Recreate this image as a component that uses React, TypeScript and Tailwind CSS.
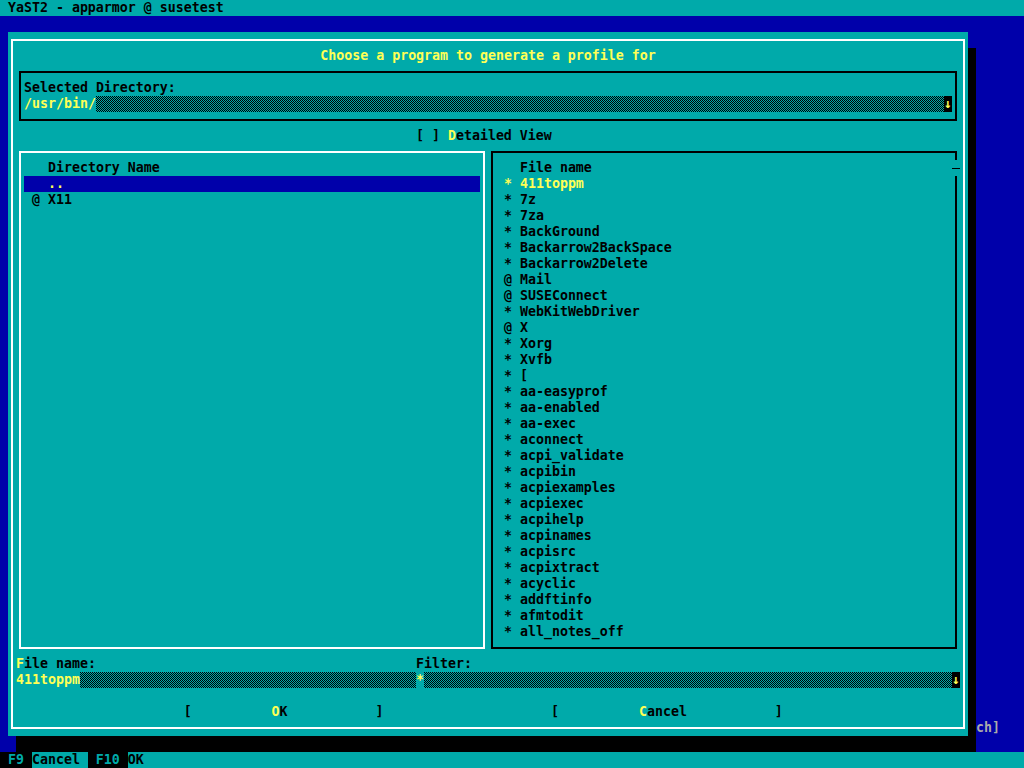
import * as React from 'react';

// 8x16 character cells, VGA-ish palette
const row = 'h-4 leading-4 whitespace-pre';

const files: [string, string][] = [
  ['*', '411toppm'],
  ['*', '7z'],
  ['*', '7za'],
  ['*', 'BackGround'],
  ['*', 'Backarrow2BackSpace'],
  ['*', 'Backarrow2Delete'],
  ['@', 'Mail'],
  ['@', 'SUSEConnect'],
  ['*', 'WebKitWebDriver'],
  ['@', 'X'],
  ['*', 'Xorg'],
  ['*', 'Xvfb'],
  ['*', '['],
  ['*', 'aa-easyprof'],
  ['*', 'aa-enabled'],
  ['*', 'aa-exec'],
  ['*', 'aconnect'],
  ['*', 'acpi_validate'],
  ['*', 'acpibin'],
  ['*', 'acpiexamples'],
  ['*', 'acpiexec'],
  ['*', 'acpihelp'],
  ['*', 'acpinames'],
  ['*', 'acpisrc'],
  ['*', 'acpixtract'],
  ['*', 'acyclic'],
  ['*', 'addftinfo'],
  ['*', 'afmtodit'],
  ['*', 'all_notes_off'],
];

const Y = ({ children }: { children: React.ReactNode }) => (
  <span className="text-[#ffff55]">{children}</span>
);

// the checkered "empty input" fill of the text ui
const Dither = ({ id }: { id: string }) => (
  <svg className="flex-1 h-4 bg-[#00aaaa]" shapeRendering="crispEdges">
    <defs>
      <pattern id={id} width="2" height="2" patternUnits="userSpaceOnUse">
        <rect x="0" y="0" width="1" height="1" fill="#000" />
        <rect x="1" y="1" width="1" height="1" fill="#000" />
      </pattern>
    </defs>
    <rect width="100%" height="100%" fill={`url(#${id})`} />
  </svg>
);

export default function App() {
  return (
    <div className="w-[1024px] h-[768px] overflow-hidden bg-[#0000aa] text-black font-['DejaVu_Sans_Mono',monospace] font-bold text-[13.28px]">
      {/* title line */}
      <div className={`${row} bg-[#00aaaa] pl-2`}>YaST2 - apparmor @ susetest</div>
      <div className="h-4 bg-[#0000aa]" />

      <div className="flex h-[720px]">
        <div className="w-2" />
        <div className="w-[960px] h-[704px] bg-[#00aaaa] shadow-[8px_16px_0_0_#000] px-[3px] py-[7px]">
          <div className="h-full border-2 border-white px-[3px] py-[7px]">
            <div className={`${row} text-center`}>
              <Y>Choose a program to generate a profile for</Y>
            </div>

            {/* Selected Directory */}
            <div className="h-16 px-[3px] py-[7px]">
              <div className="h-full border-2 border-black px-[3px] py-[7px]">
                <div className={row}>Selected Directory:</div>
                <div className="flex h-4">
                  <div className={`${row} w-[72px] shrink-0`}>
                    <Y>/usr/bin/</Y>
                  </div>
                  <Dither id="d1" />
                  <div className={`${row} w-2 bg-black text-[#ffff55]`}>↓</div>
                </div>
              </div>
            </div>

            <div className={`${row} pl-[400px]`}>
              [ ] <Y>D</Y>etailed View
            </div>

            <div className="flex">
              {/* directories */}
              <div className="w-[472px] h-[512px] px-[3px] py-[7px]">
                <div className="h-full border-2 border-white px-[3px] py-[7px]">
                  <div className={row}>{'   Directory Name'}</div>
                  <div className={`${row} bg-[#0000aa]`}>
                    {'   '}
                    <Y>..</Y>
                  </div>
                  <div className={row}>{' @ X11'}</div>
                </div>
              </div>

              {/* files */}
              <div className="w-[472px] h-[512px] px-[3px] py-[7px]">
                <div className="relative h-full border-2 border-black px-[3px] py-[7px]">
                  <div className={row}>{'   File name'}</div>
                  {files.map(([mark, name], i) => (
                    <div key={name} className={`${row} ${i === 0 ? 'text-[#ffff55]' : ''}`}>
                      {' ' + mark + ' ' + name}
                    </div>
                  ))}
                  <div className="absolute top-[7px] right-[-5px] w-2 h-4 bg-[#00aaaa] flex items-center">
                    <div className="h-px w-full bg-black" />
                  </div>
                </div>
              </div>
            </div>

            {/* file name + filter */}
            <div className="flex">
              <div className={`${row} w-[400px]`}>
                <Y>F</Y>ile name:
              </div>
              <div className={row}>Filter:</div>
            </div>
            <div className="flex h-4">
              <div className="flex w-[400px]">
                <div className={`${row} w-16 shrink-0`}>
                  <Y>411toppm</Y>
                </div>
                <Dither id="d2" />
              </div>
              <div className="flex flex-1">
                <div className={`${row} w-2`}>
                  <Y>*</Y>
                </div>
                <Dither id="d3" />
                <div className={`${row} w-2 bg-black text-[#ffff55]`}>↓</div>
              </div>
            </div>
            <div className="h-4" />
            <div className={row}>
              {'                     [          '}
              <Y>O</Y>
              {'K           ]                     [          '}
              <Y>C</Y>
              {'ancel           ]'}
            </div>
          </div>
        </div>
        <div className="flex flex-col justify-end pb-4 pl-2">
          <div className={`${row} text-[#aaaaaa]`}>ch]</div>
        </div>
      </div>

      {/* key hints */}
      <div className={`${row} flex bg-[#00aaaa]`}>
        <span className="bg-black text-[#00aaaa]">{' F9 '}</span>
        <span>{'Cancel '}</span>
        <span className="bg-black text-[#00aaaa]">{' F10 '}</span>
        <span>OK</span>
      </div>
    </div>
  );
}
